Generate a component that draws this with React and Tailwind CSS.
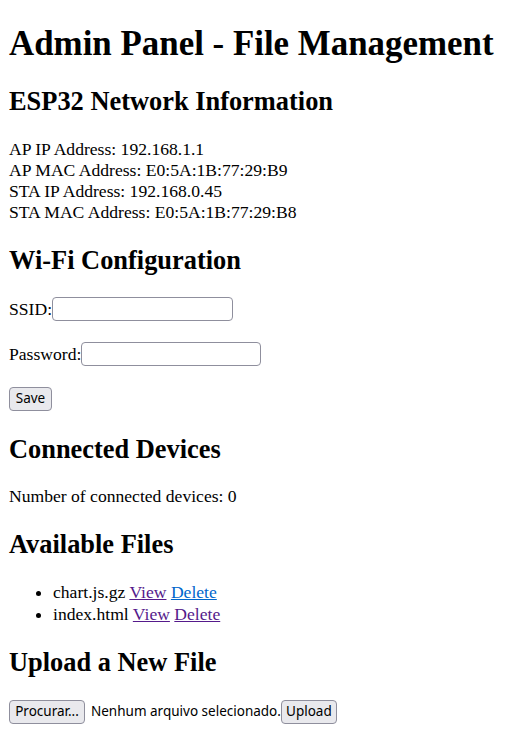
export default function App() {
  const ui = "font-['Noto_Sans',sans-serif] text-[13.5px]";
  const btnBase = `${ui} h-[24px] leading-none bg-[#e9e9ed] border border-[#8f8f9d] rounded-[4px] text-black`;
  const input = "h-[24px] bg-white border border-[#8f8f9d] rounded-[4px]";

  return (
    <div className="font-['Liberation_Serif',serif] text-[17.6px] text-black bg-white min-h-screen px-[9px] pt-[23.6px] pb-4">
      <h1 className="text-[34.9px] font-bold leading-[40px]">Admin Panel - File Management</h1>

      <h2 className="text-[26.4px] font-bold leading-[30px] mt-[22px]">ESP32 Network Information</h2>
      <div className="leading-[21px] mt-[23px]">
        <p>AP IP Address: 192.168.1.1</p>
        <p>AP MAC Address: E0:5A:1B:77:29:B9</p>
        <p>STA IP Address: 192.168.0.45</p>
        <p>STA MAC Address: E0:5A:1B:77:29:B8</p>
      </div>

      <h2 className="text-[26.4px] font-bold leading-[30px] mt-[22px]">Wi-Fi Configuration</h2>
      <form className="mt-[22px]">
        <div className="flex items-center h-[25px]">
          <label>SSID:</label>
          <input type="text" className={`${input} w-[181px]`} />
        </div>
        <div className="flex items-center h-[25px] mt-[20px]">
          <label>Password:</label>
          <input type="password" className={`${input} w-[180px]`} />
        </div>
        <div className="flex items-center h-[25px] mt-[20px]">
          <button type="button" className={`${btnBase} w-[43px]`}>Save</button>
        </div>
      </form>

      <h2 className="text-[26.4px] font-bold leading-[30px] mt-[22px]">Connected Devices</h2>
      <p className="leading-[21px] mt-[22px]">Number of connected devices: 0</p>

      <h2 className="text-[26.4px] font-bold leading-[30px] mt-[22px]">Available Files</h2>
      <ul className="list-disc pl-[44px] leading-[22px] mt-[22px]">
        <li>
          chart.js.gz{" "}
          <a href="#" className="text-[#551a8b] underline">View</a>{" "}
          <a href="#" className="text-[#0066cc] underline">Delete</a>
        </li>
        <li>
          index.html{" "}
          <a href="#" className="text-[#551a8b] underline">View</a>{" "}
          <a href="#" className="text-[#551a8b] underline">Delete</a>
        </li>
      </ul>

      <h2 className="text-[26.4px] font-bold leading-[30px] mt-[22px]">Upload a New File</h2>
      <form className="flex items-center h-[26px] mt-[22px]">
        <button type="button" className={`${btnBase} w-[76px]`}>Procurar...</button>
        <span className={`${ui} ml-[6px]`}>Nenhum arquivo selecionado.</span>
        <button type="button" className={`${btnBase} w-[56px]`}>Upload</button>
      </form>
    </div>
  );
}
